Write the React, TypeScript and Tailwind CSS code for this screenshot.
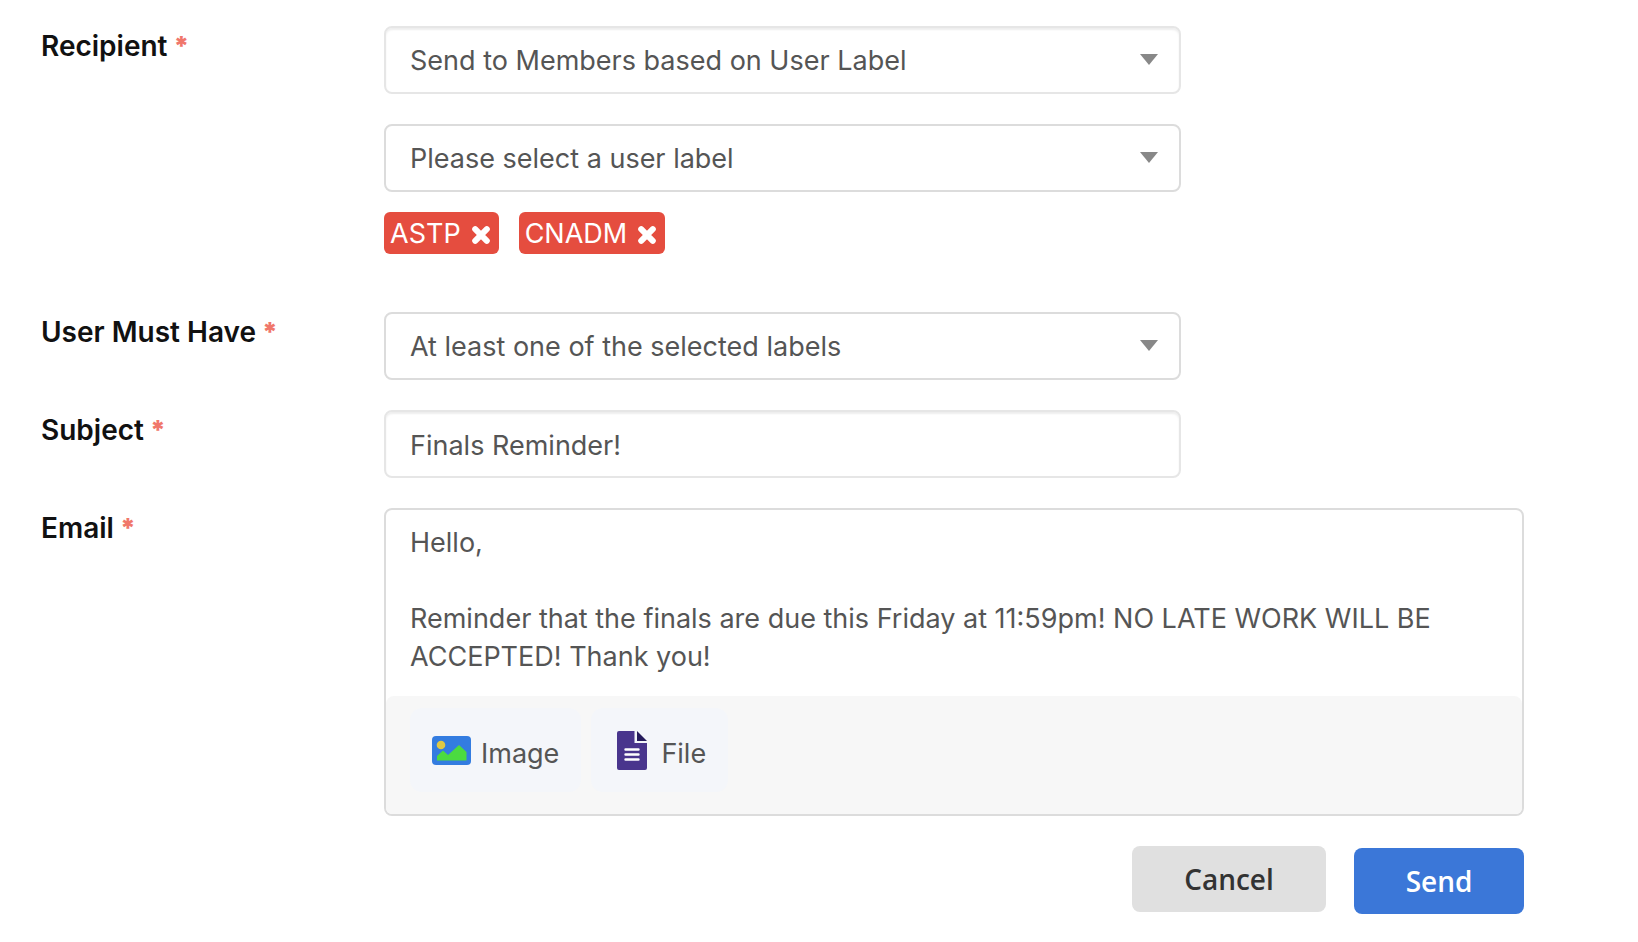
import { useState } from "react"
import type { ReactNode } from "react"

const field =
  "block w-full h-[68px] rounded-lg border-2 bg-white pt-0.5 pl-6 text-[27px] text-[#555] outline-none"
const plainBorder = "border-[#dcdcdc]"
const insetBorder = "border-[#e6e6e6] shadow-[inset_0_2px_2px_rgba(0,0,0,0.07)]"

const Row = ({ id, label, wide, children }: { id: string; label: string; wide?: boolean; children: ReactNode }) => {
  return <div className="grid grid-cols-[343fr_797fr_343fr] items-start">
    <label htmlFor={id} className="flex gap-1.5 text-[28px] leading-[40px] font-semibold text-[#111]">
      {label} <span className="text-[26px] font-black text-[#f0776b]">*</span>
    </label>
    <div className={wide ? "col-span-2" : ""}>{children}</div>
  </div>
}

const Select = ({ id, value, border, label }: { id: string; value: string; border: string; label?: string }) => {
  return <div className="relative">
    <select id={id} aria-label={label} className={`${field} ${border} appearance-none pr-16`}>
      <option>{value}</option>
    </select>
    <svg viewBox="0 0 18 11" className="pointer-events-none absolute right-[23px] top-7 h-[11px] w-[18px]">
      <path d="M0 0h18L9 11z" fill="#888" />
    </svg>
  </div>
}

const Chip = ({ text, onRemove }: { text: string; onRemove: () => void }) => {
  return <span className="flex h-[42px] items-center gap-2.5 rounded-md bg-[#e54d3f] pr-2 pl-1.5 text-[27px] text-white">
    <span className="pt-0.5">{text}</span>
    <button type="button" aria-label={`Remove ${text}`} onClick={onRemove}>
      <svg viewBox="0 0 20 20" className="mt-1 h-5 w-5">
        <path d="M4.2 4.2l11.6 11.6M15.8 4.2L4.2 15.8" stroke="#fff" strokeWidth="6" strokeLinecap="round" />
      </svg>
    </button>
  </span>
}

const ImageIcon = () => (
  <svg viewBox="0 0 39 29" className="h-[29px] w-[39px]">
    <rect width="39" height="29" rx="4" fill="#337ce0" />
    <circle cx="9" cy="9" r="4.3" fill="#dfc844" />
    <path d="M5 24v-4l6-5.500 5 4.500L27 9l7.500 7v8.500H5z" fill="#4bdb40" />
  </svg>
)

const FileIcon = () => (
  <svg viewBox="0 0 30 39" className="h-[39px] w-[30px]">
    <path d="M2 0h15.500v12H30v25a2 2 0 0 1-2 2H2a2 2 0 0 1-2-2V2a2 2 0 0 1 2-2z" fill="#49358d" />
    <path d="M20 0l10 10H20z" fill="#251b5b" />
    <path d="M8.500 18.500h13M8.500 23.500h13M8.500 28.500h13" stroke="#fff" strokeWidth="2.400" strokeLinecap="round" />
  </svg>
)

export default function App() {
  const [labels, setLabels] = useState(["ASTP", "CNADM"])

  return <form
    onSubmit={(e) => e.preventDefault()}
    className="flex flex-col gap-[30px] bg-white pt-[26px] pr-[114px] pb-7 pl-[41px] font-['Inter','Liberation_Sans',sans-serif]"
  >
    <Row id="recipient" label="Recipient">
      <Select id="recipient" value="Send to Members based on User Label" border={insetBorder} />
      <div className="mt-[30px]">
        <Select id="user-label" label="User label" value="Please select a user label" border={plainBorder} />
      </div>
      <div className="mt-5 mb-7 flex gap-5">
        {labels.map((l) => (
          <Chip key={l} text={l} onRemove={() => setLabels(labels.filter((x) => x !== l))} />
        ))}
      </div>
    </Row>

    <Row id="must-have" label="User Must Have">
      <Select id="must-have" value="At least one of the selected labels" border={plainBorder} />
    </Row>

    <Row id="subject" label="Subject">
      <input id="subject" type="text" defaultValue="Finals Reminder!" className={`${field} ${insetBorder} pr-6`} />
    </Row>

    <Row id="email" label="Email" wide>
      <div className="overflow-hidden rounded-lg border-2 border-[#dcdcdc]">
        <textarea
          id="email"
          rows={4}
          className="block w-full resize-none px-6 pt-3.5 pb-5 text-[27px] leading-[38px] text-[#555] outline-none"
          defaultValue={"Hello,\n\nReminder that the finals are due this Friday at 11:59pm! NO LATE WORK WILL BE ACCEPTED! Thank you!"}
        />
        {/* attachments */}
        <div className="flex gap-2.5 rounded-t-lg bg-[#f7f7f7] px-6 pt-3 pb-[22px] text-[27px] text-[#555]">
          <button type="button" className="flex h-[84px] items-center gap-2.5 rounded-xl bg-[#f4f6fa] px-[22px]">
            <ImageIcon />
            <span className="pt-2">Image</span>
          </button>
          <button type="button" className="flex h-[84px] items-center gap-3.5 rounded-xl bg-[#f4f6fa] pr-[22px] pl-[26px]">
            <FileIcon />
            <span className="pt-2">File</span>
          </button>
        </div>
      </div>
    </Row>

    {/* actions */}
    <div className="flex items-start justify-end gap-7 font-['Open_Sans','Noto_Sans',sans-serif] text-[28px] font-semibold">
      <button type="button" className="h-[66px] w-[194px] rounded-lg bg-[#e0e0e0] text-[#333]">Cancel</button>
      <button type="submit" className="mt-0.5 h-[66px] w-[170px] rounded-lg bg-[#3b77d8] text-white">Send</button>
    </div>
  </form>
}
